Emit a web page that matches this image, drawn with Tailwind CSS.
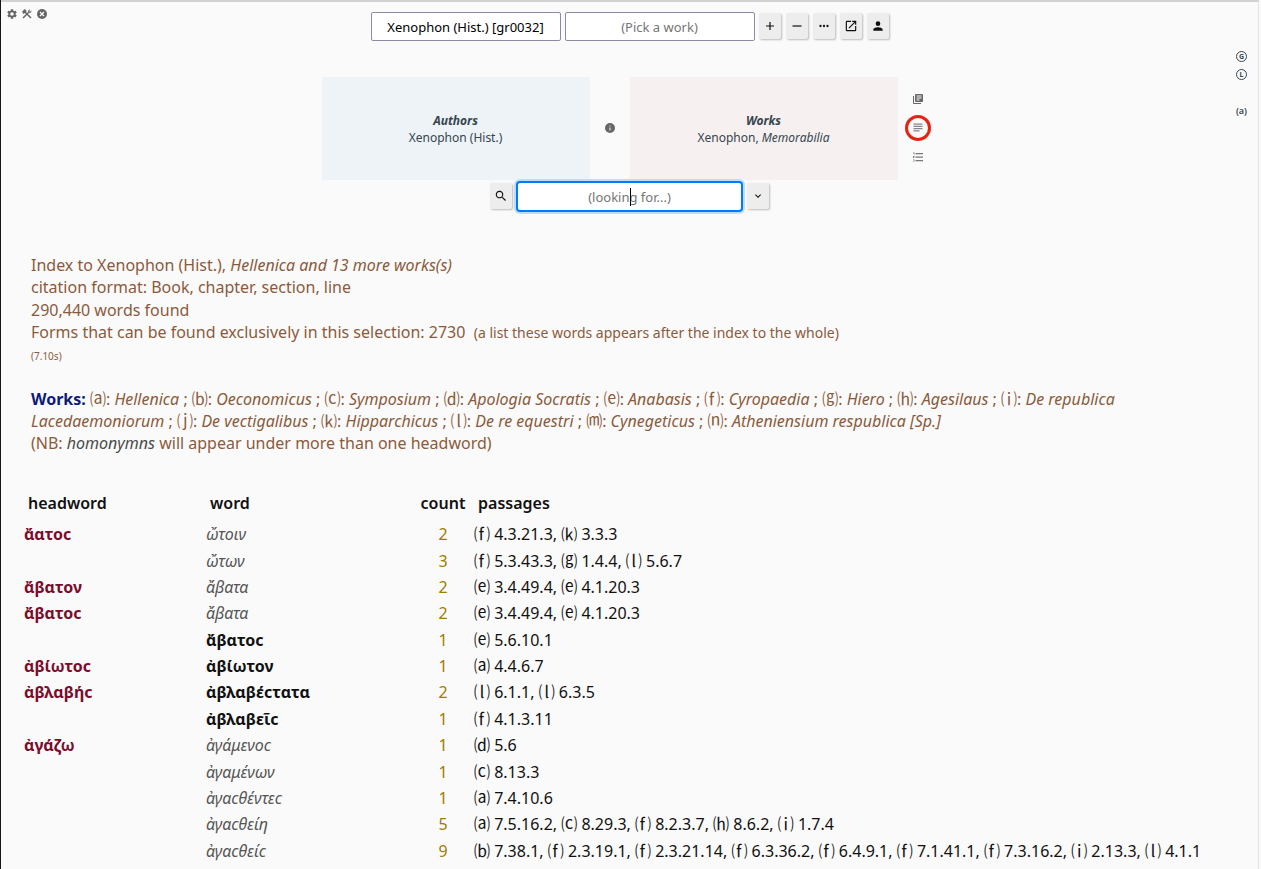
<!DOCTYPE html>
<html lang="en">
<head>
<meta charset="utf-8">
<title>Index to Xenophon (Hist.)</title>
<meta name="viewport" content="width=device-width, initial-scale=1">
<script src="https://cdn.jsdelivr.net/npm/@tailwindcss/browser@4"></script>
</head>
<body class="min-h-screen bg-[#fafafa] font-['Noto_Sans','Noto_Sans_CJK_JP',sans-serif] text-base text-[#111]">
<div class="h-screen overflow-hidden border-l border-l-[#15151c] pr-0.5">
<div class="h-full border-t-2 border-r border-t-[#d0d2d0] border-r-[#e2e2e2]">

<header class="grid grid-cols-[1fr_616px_1fr]">
  <nav class="flex items-start gap-[3px] pt-1.5 pl-[5px] text-[#666]" aria-label="Session">
    <button aria-label="Settings"><svg class="size-3" viewBox="0 0 24 24" fill="currentColor"><path d="M19.14 12.94c.04-.3.06-.61.06-.94s-.02-.64-.07-.94l2.03-1.58a.49.49 0 0 0 .12-.61l-1.92-3.32a.49.49 0 0 0-.59-.22l-2.39.96a7 7 0 0 0-1.62-.94l-.36-2.54a.48.48 0 0 0-.48-.41h-3.84a.47.47 0 0 0-.47.41l-.36 2.54a7.4 7.4 0 0 0-1.62.94l-2.39-.96a.48.48 0 0 0-.59.22L2.74 8.87a.47.47 0 0 0 .12.61l2.03 1.58a6 6 0 0 0 0 1.88l-2.03 1.58a.49.49 0 0 0-.12.61l1.92 3.32c.12.22.37.29.59.22l2.39-.96c.5.38 1.03.7 1.62.94l.36 2.54c.05.24.24.41.48.41h3.84c.24 0 .44-.17.47-.41l.36-2.54a7 7 0 0 0 1.62-.94l2.39.96c.22.08.47 0 .59-.22l1.92-3.32a.47.47 0 0 0-.12-.61zM12 15.6A3.6 3.6 0 1 1 12 8.4a3.6 3.6 0 0 1 0 7.2z"/></svg></button>
    <button aria-label="Tools"><svg class="size-3" viewBox="0 0 24 24"><path d="M4 20 15.500 8.500M8 8l12 12" stroke="currentColor" stroke-width="3" fill="none"/><path d="M2 7.500 7.500 2l4 4L6 11.500H3.500V9zM20.600 5l-2.800 2.700-1.500-1.500L19 3.400A3.700 3.700 0 0 0 14 7l3 3a3.700 3.700 0 0 0 3.600-5z" fill="currentColor"/></svg></button>
    <button aria-label="Reset"><svg class="size-3" viewBox="0 0 24 24"><circle cx="12" cy="12" r="10" fill="currentColor"/><path d="m8 8 8 8M16 8l-8 8" stroke="#fafafa" stroke-width="2.500"/></svg></button>
  </nav>

  <div>
    <form class="flex items-start justify-center gap-1 pt-2.5">
      <input type="text" aria-label="Author" value="Xenophon (Hist.) [gr0032]" class="h-[29px] w-[190px] rounded-xs border border-[#8e8aa6] bg-white text-center text-[13px] text-black">
      <input type="text" aria-label="Work" placeholder="(Pick a work)" class="h-[29px] w-[190px] rounded-xs border border-[#8e8aa6] bg-white text-center text-[13px] placeholder:text-[#757575]">
      <div class="mt-px flex w-[130px] justify-between">
        <button type="button" aria-label="Add" class="flex h-[26px] w-[22px] items-center justify-center rounded-xs bg-[#ededed] shadow-[1px_1px_2px_#bbb]"><svg class="size-3" viewBox="0 0 24 24" fill="currentColor"><path d="M20 13.200h-6.800V20h-2.400v-6.800H4v-2.400h6.800V4h2.400v6.800H20z"/></svg></button>
        <button type="button" aria-label="Remove" class="flex h-[26px] w-[22px] items-center justify-center rounded-xs bg-[#ededed] shadow-[1px_1px_2px_#bbb]"><svg class="size-3" viewBox="0 0 24 24" fill="currentColor"><path d="M3 10.800h18v2.400H3z"/></svg></button>
        <button type="button" aria-label="More" class="flex h-[26px] w-[22px] items-center justify-center rounded-xs bg-[#ededed] shadow-[1px_1px_2px_#bbb]"><svg class="size-3" viewBox="0 0 24 24" fill="currentColor"><circle cx="5" cy="12" r="2.300"/><circle cx="12" cy="12" r="2.300"/><circle cx="19" cy="12" r="2.300"/></svg></button>
        <button type="button" aria-label="Open" class="flex h-[26px] w-[22px] items-center justify-center rounded-xs bg-[#ededed] shadow-[1px_1px_2px_#bbb]"><svg class="size-3.5" viewBox="0 0 24 24" fill="currentColor"><path d="M19 19H5V5h7V3H5a2 2 0 0 0-2 2v14a2 2 0 0 0 2 2h14a2 2 0 0 0 2-2v-7h-2zM14 3v2h3.590l-9.830 9.830 1.410 1.410L19 6.410V10h2V3z"/></svg></button>
        <button type="button" aria-label="User" class="flex h-[26px] w-[22px] items-center justify-center rounded-xs bg-[#ededed] shadow-[1px_1px_2px_#bbb]"><svg class="size-3.5" viewBox="0 0 24 24" fill="currentColor"><path d="M12 12a4 4 0 1 0 0-8 4 4 0 0 0 0 8zm0 2c-2.670 0-8 1.340-8 4v2h16v-2c0-2.660-5.330-4-8-4z"/></svg></button>
      </div>
    </form>

    <section class="mt-9 grid h-[103px] grid-cols-[1fr_40px_1fr_40px] text-center text-xs leading-[17px] text-[#36454f]">
      <div class="flex flex-col justify-center bg-[#edf3f6]">
        <h2 class="font-bold italic">Authors</h2>
        <p>Xenophon (Hist.)</p>
      </div>
      <button aria-label="Information" class="flex items-center justify-center pb-px text-[#666]"><svg class="size-3" viewBox="0 0 24 24" fill="currentColor"><path d="M12 2a10 10 0 1 0 0 20 10 10 0 0 0 0-20zm1 15h-2v-6h2zm0-8h-2V7h2z"/></svg></button>
      <div class="flex flex-col justify-center bg-[#f7f0f0]">
        <h2 class="font-bold italic">Works</h2>
        <p>Xenophon, <i>Memorabilia</i></p>
      </div>
      <div class="flex flex-col items-center justify-center gap-[9px] pb-0.5">
        <button aria-label="Build a text" class="p-1 text-[#666]"><svg class="size-3" viewBox="0 0 24 24" fill="currentColor"><path d="M4 6H2v14a2 2 0 0 0 2 2h14v-2H4zM20 2H8a2 2 0 0 0-2 2v12a2 2 0 0 0 2 2h12a2 2 0 0 0 2-2V4a2 2 0 0 0-2-2zm-1 9H9V9h10zm-4 4H9v-2h6zm4-8H9V5h10z"/></svg></button>
        <button aria-label="Build an index" class="-my-[3px] flex size-[26px] items-center justify-center rounded-full border-3 border-[#e42313] text-[#888]"><svg class="size-3" viewBox="0 0 24 24" fill="currentColor"><path d="M3 3h18v2.500H3zM3 7.500h18V10H3zM3 12h18v2.500H3zM3 16.500h12V19H3z"/></svg></button>
        <button aria-label="Build a word list" class="p-1 text-[#777]"><svg class="size-3" viewBox="0 0 24 24" fill="currentColor"><path d="M7 4h15v2.500H7zM7 11h15v2.500H7zM7 18h15v2.500H7zM2 3h3v4H3.500V4.500H2zM2 10h3v1l-1.500 2H5v1H2zM2 17h3v4H2v-1h1.500v-2H2z"/></svg></button>
      </div>
    </section>

    <form class="mt-px flex items-start justify-center gap-1">
      <button type="button" aria-label="Search" class="mt-0.5 flex h-[26px] w-[22px] items-center justify-center rounded-xs bg-[#ededed] shadow-[1px_1px_2px_#bbb]"><svg class="size-3.5" viewBox="0 0 24 24" fill="currentColor"><path d="M15.500 14h-.790l-.280-.270A6.500 6.500 0 1 0 13.730 14.430l.270.280v.790l5 4.990L20.490 19zm-6 0a4.500 4.500 0 1 1 0-9 4.500 4.500 0 0 1 0 9z"/></svg></button>
      <div class="relative">
        <input type="text" aria-label="Search term" placeholder="(looking for...)" class="block h-[31px] w-[227px] rounded-sm border-2 border-[#007aff] bg-white text-center text-[13px] ring-2 ring-[#bbdefb] outline-none placeholder:text-[#757575]">
        <span class="absolute top-[7px] left-1/2 h-[18px] w-px bg-black"></span>
      </div>
      <button type="button" aria-label="More options" class="mt-0.5 flex h-[26px] w-[22px] items-center justify-center rounded-xs bg-[#ededed] shadow-[1px_1px_2px_#bbb]"><svg class="size-3" viewBox="0 0 24 24" fill="currentColor"><path d="M16.590 8.590 12 13.170 7.410 8.590 6 10l6 6 6-6z"/></svg></button>
    </form>
  </div>

  <nav class="flex flex-col items-end pt-[49px] pr-[11px] text-[#36454f]" aria-label="Corpora">
    <button class="flex size-[11px] items-center justify-center rounded-full border border-current text-[7px] leading-none font-bold">G</button>
    <button class="mt-[7px] flex size-[11px] items-center justify-center rounded-full border border-current text-[7px] leading-none font-bold">L</button>
    <button class="mt-[26px] text-[9px] leading-[10px] font-semibold">(a)</button>
  </nav>
</header>

<main>
  <section class="mt-[42px] mr-24 ml-[30px] leading-[1.4] text-[#8b5a3c]">
    <p>Index to Xenophon (Hist.), <i>Hellenica and 13 more works(s)</i></p>
    <p>citation format: Book, chapter, section, line</p>
    <p>290,440 words found</p>
    <p>Forms that can be found exclusively in this selection: 2730 &nbsp;<span class="text-sm leading-none">(a list these words appears after the index to the whole)</span></p>
    <p class="flex h-6 items-center text-[10px]">(7.10s)</p>
    <p class="mt-5"><b class="text-[#0f1a7d]">Works:</b> ⒜: <i>Hellenica</i> ; ⒝: <i>Oeconomicus</i> ; ⒞: <i>Symposium</i> ; ⒟: <i>Apologia Socratis</i> ; ⒠: <i>Anabasis</i> ; ⒡: <i>Cyropaedia</i> ; ⒢: <i>Hiero</i> ; ⒣: <i>Agesilaus</i> ; ⒤: <i>De republica Lacedaemoniorum</i> ; ⒥: <i>De vectigalibus</i> ; ⒦: <i>Hipparchicus</i> ; ⒧: <i>De re equestri</i> ; ⒨: <i>Cynegeticus</i> ; ⒩: <i>Atheniensium respublica [Sp.]</i></p>
    <p>(NB: <i class="text-[#4a4a4a]">homonymns</i> will appear under more than one headword)</p>
  </section>

  <table class="mt-[35px] ml-[23px] border-collapse text-left leading-[1.65]">
    <thead>
      <tr>
        <th class="w-[182px] pb-[5px] pl-1 font-semibold">headword</th>
        <th class="w-[211px] pb-[5px] pl-1 font-semibold">word</th>
        <th class="w-[52px] pb-[5px] text-center font-semibold">count</th>
        <th class="pb-[5px] pl-[9px] font-semibold">passages</th>
      </tr>
    </thead>
    <tbody class="[&_td]:whitespace-nowrap [&_td:first-child]:font-bold [&_td:first-child]:text-[#7b0d2c] [&_td:nth-child(3)]:text-center [&_td:nth-child(3)]:text-[#a07c00] [&_td:last-child]:pl-[5px] [&_i]:text-[#555]">
      <tr><td>ἄατοϲ</td><td><i>ὤτοιν</i></td><td>2</td><td>⒡ 4.3.21.3, ⒦ 3.3.3</td></tr>
      <tr><td></td><td><i>ὤτων</i></td><td>3</td><td>⒡ 5.3.43.3, ⒢ 1.4.4, ⒧ 5.6.7</td></tr>
      <tr><td>ἄβατον</td><td><i>ἄβατα</i></td><td>2</td><td>⒠ 3.4.49.4, ⒠ 4.1.20.3</td></tr>
      <tr><td>ἄβατοϲ</td><td><i>ἄβατα</i></td><td>2</td><td>⒠ 3.4.49.4, ⒠ 4.1.20.3</td></tr>
      <tr><td></td><td><b>ἄβατοϲ</b></td><td>1</td><td>⒠ 5.6.10.1</td></tr>
      <tr><td>ἀβίωτοϲ</td><td><b>ἀβίωτον</b></td><td>1</td><td>⒜ 4.4.6.7</td></tr>
      <tr><td>ἀβλαβήϲ</td><td><b>ἀβλαβέϲτατα</b></td><td>2</td><td>⒧ 6.1.1, ⒧ 6.3.5</td></tr>
      <tr><td></td><td><b>ἀβλαβεῖϲ</b></td><td>1</td><td>⒡ 4.1.3.11</td></tr>
      <tr><td>ἀγάζω</td><td><i>ἀγάμενοϲ</i></td><td>1</td><td>⒟ 5.6</td></tr>
      <tr><td></td><td><i>ἀγαμένων</i></td><td>1</td><td>⒞ 8.13.3</td></tr>
      <tr><td></td><td><i>ἀγαϲθέντεϲ</i></td><td>1</td><td>⒜ 7.4.10.6</td></tr>
      <tr><td></td><td><i>ἀγαϲθείη</i></td><td>5</td><td>⒜ 7.5.16.2, ⒞ 8.29.3, ⒡ 8.2.3.7, ⒣ 8.6.2, ⒤ 1.7.4</td></tr>
      <tr><td></td><td><i>ἀγαϲθείϲ</i></td><td>9</td><td>⒝ 7.38.1, ⒡ 2.3.19.1, ⒡ 2.3.21.14, ⒡ 6.3.36.2, ⒡ 6.4.9.1, ⒡ 7.1.41.1, ⒡ 7.3.16.2, ⒤ 2.13.3, ⒧ 4.1.1</td></tr>
    </tbody>
  </table>
</main>
</div>
</div>
</body>
</html>
